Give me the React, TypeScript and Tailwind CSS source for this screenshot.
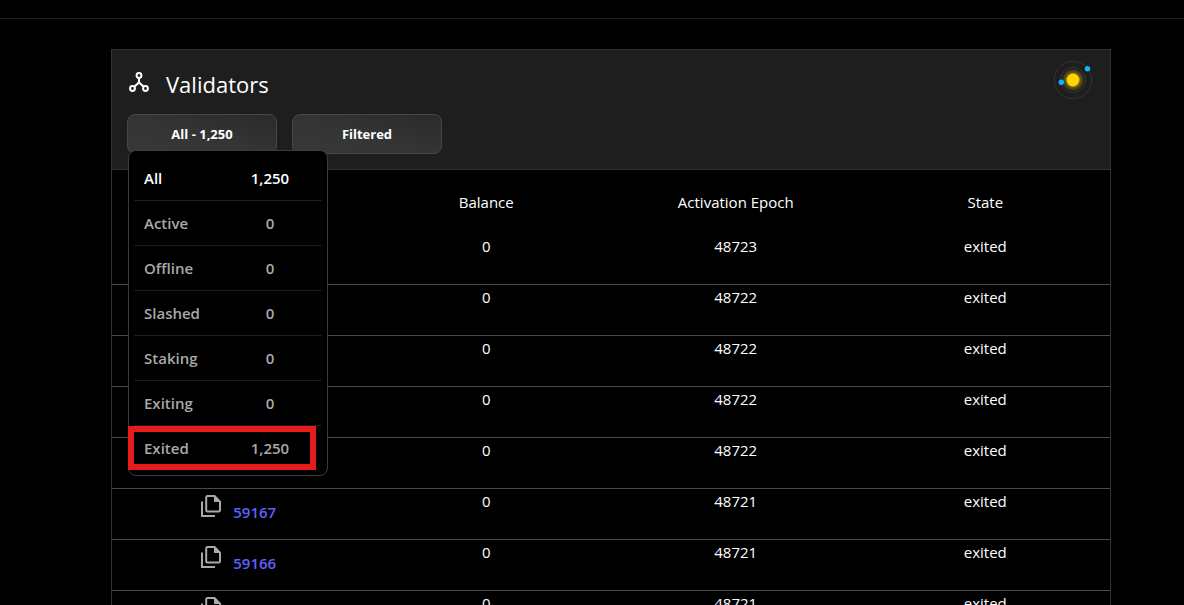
import React from "react";

const filters: { label: string; count: string; selected?: boolean; marked?: boolean }[] = [
  { label: "All", count: "1,250", selected: true },
  { label: "Active", count: "0" },
  { label: "Offline", count: "0" },
  { label: "Slashed", count: "0" },
  { label: "Staking", count: "0" },
  { label: "Exiting", count: "0" },
  { label: "Exited", count: "1,250", marked: true },
];

const validators: { id?: string; epoch: string }[] = [
  { epoch: "48723" },
  { epoch: "48722" },
  { epoch: "48722" },
  { epoch: "48722" },
  { epoch: "48722" },
  { id: "59167", epoch: "48721" },
  { id: "59166", epoch: "48721" },
  { id: "59165", epoch: "48721" },
];

function NodesIcon() {
  return (
    <svg className="size-6 shrink-0" viewBox="0 0 24 24" fill="none" stroke="#fff" strokeWidth="2" aria-hidden="true">
      <circle cx="12" cy="5.500" r="2.400" />
      <circle cx="5.500" cy="18.500" r="2.400" />
      <circle cx="18.500" cy="18.500" r="2.400" />
      <path d="M12 8V12.500M7.300 16.800 12 12.400l4.700 4.400" />
    </svg>
  );
}

function OrbitIcon() {
  return (
    <svg className="size-10" viewBox="0 0 40 40" role="img" aria-label="Network status">
      <defs>
        <radialGradient id="glow">
          <stop offset="0.4" stopColor="#ffd500" stopOpacity="0.55" />
          <stop offset="1" stopColor="#ffd500" stopOpacity="0" />
        </radialGradient>
      </defs>
      <circle cx="20" cy="20" r="18.500" fill="none" stroke="#404040" strokeDasharray="2 1" />
      <circle cx="20" cy="20" r="12.500" fill="none" stroke="#404040" strokeDasharray="2 1" />
      <circle cx="20" cy="20" r="11.500" fill="url(#glow)" />
      <circle cx="20" cy="20" r="6.400" fill="#ffd500" />
      <circle cx="8.300" cy="22.300" r="2.700" fill="#0db4ff" />
      <circle cx="34.500" cy="8.800" r="2.700" fill="#0db4ff" />
    </svg>
  );
}

function CopyIcon() {
  return (
    <svg className="size-6" viewBox="0 0 24 24" fill="none" stroke="#a9a9a9" strokeWidth="2" aria-hidden="true">
      <path d="M2 7.500V22H15" />
      <path d="M7.500 2h7l5.500 5.600v8.700a1.300 1.300 0 0 1-1.300 1.300H7.500a1.300 1.300 0 0 1-1.300-1.300V3.300A1.300 1.300 0 0 1 7.500 2z" />
      <path d="M14 2v6h6z" fill="#a9a9a9" stroke="none" />
    </svg>
  );
}

function FilterMenu() {
  return (
    <ul className="absolute top-9 left-0 z-10 ml-px w-[200px] rounded-lg border border-[#3c3c3c] bg-black p-[5px]">
      {filters.map((f) => (
        <li key={f.label} className="relative border-b border-[#1c1c1c] last:border-b-0">
          <button
            type="button"
            className={`flex h-11 w-full items-center pl-2.5 text-left text-[15px] font-semibold ${f.selected ? "text-white" : "text-[#a9a9a9]"}`}
          >
            <span className="w-24">{f.label}</span>
            <span className="w-[60px] text-center">{f.count}</span>
          </button>
          {f.marked && (
            <span className="pointer-events-none absolute inset-y-0 right-1.5 -left-1.5 border-6 border-[#e51c1c]" />
          )}
        </li>
      ))}
    </ul>
  );
}

const actionButton =
  "h-10 w-[150px] rounded-lg border border-[#474747] bg-linear-to-tr from-[#383838] via-[#343434] to-[#2a2a2a] pt-0.5 text-[13px] font-bold text-white";

export default function App() {
  return (
    <div className="h-screen overflow-hidden bg-black font-['Open_Sans','Noto_Sans',sans-serif] text-white">
      <div className="h-[19px] border-b border-[#1e1e1e]" />
      <main className="mt-[30px] mr-[73px] ml-[111px] border border-[#333]">
        <header className="flex items-start justify-between border-b border-[#333] bg-[#1e1e1e] pr-[17px] pb-[15px] pl-[15px]">
          <div>
            <div className="flex h-16 items-center gap-[15px]">
              <NodesIcon />
              <h1 className="pt-1 text-[22px]">Validators</h1>
            </div>
            <div className="flex gap-[15px]">
              <div className="relative">
                <button type="button" className={actionButton}>
                  All - 1,250
                </button>
                <FilterMenu />
              </div>
              <button type="button" className={actionButton}>
                Filtered
              </button>
            </div>
          </div>
          <div className="pt-2.5">
            <OrbitIcon />
          </div>
        </header>
        <table className="w-full table-fixed border-separate border-spacing-0 text-center text-[15px] leading-6">
          <thead>
            <tr className="h-16">
              <th />
              <th className="font-normal">Balance</th>
              <th className="font-normal">Activation Epoch</th>
              <th className="font-normal">State</th>
            </tr>
          </thead>
          <tbody>
            {validators.map((v, i) => (
              <tr key={i} className="h-[51px] align-top *:border-b *:border-[#4a4a4a]">
                <td>
                  {v.id && (
                    <div className="flex justify-center gap-[9px] pt-[5px] pl-[3px]">
                      <button type="button" aria-label={`Copy ${v.id}`} className="h-6">
                        <CopyIcon />
                      </button>
                      <a href={`#${v.id}`} className="pt-1.5 font-semibold text-[#6060ff]">
                        {v.id}
                      </a>
                    </div>
                  )}
                </td>
                <td>0</td>
                <td>{v.epoch}</td>
                <td>exited</td>
              </tr>
            ))}
          </tbody>
        </table>
      </main>
    </div>
  );
}
